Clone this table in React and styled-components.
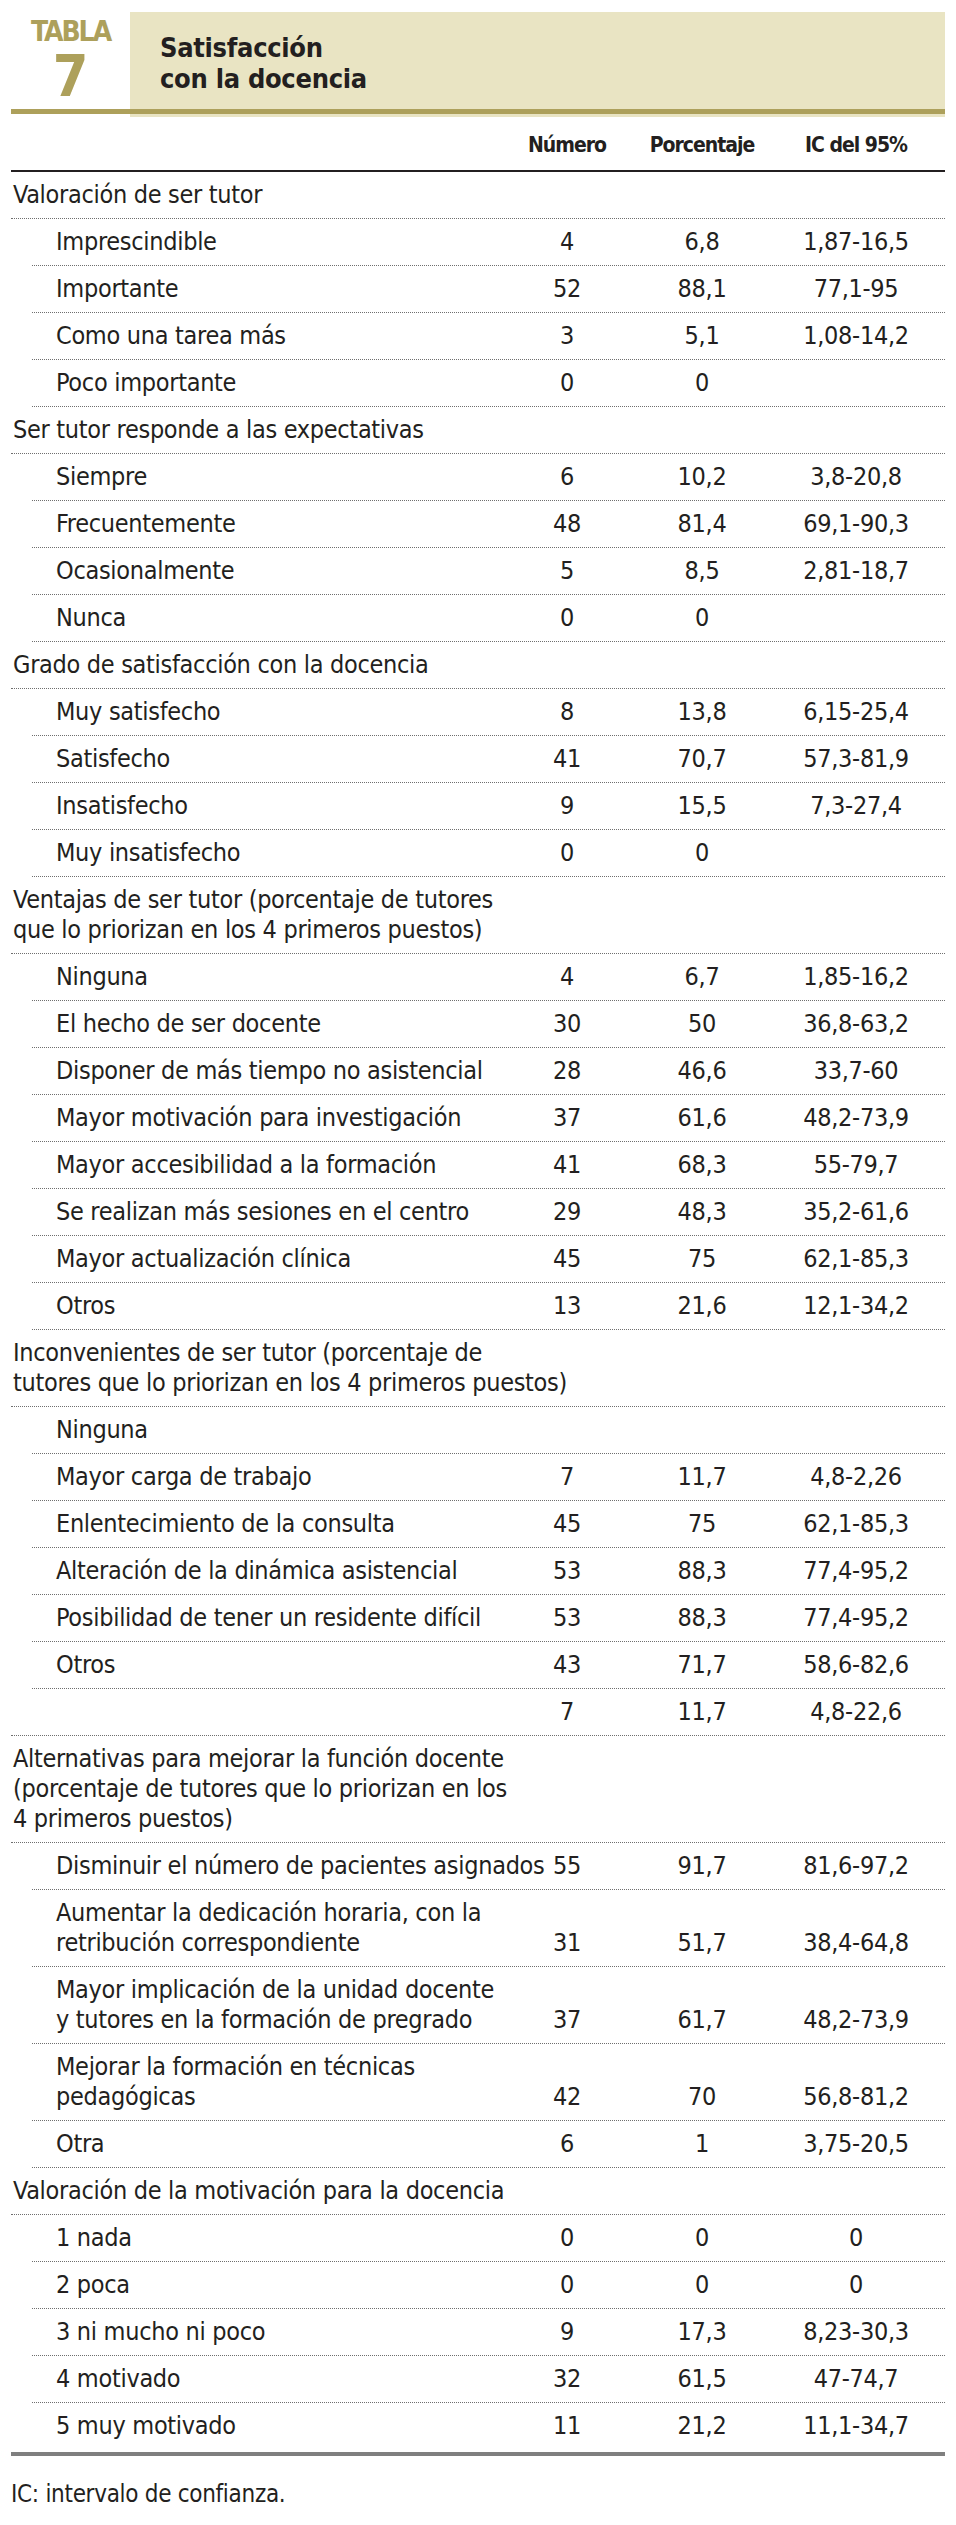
import styled, { createGlobalStyle } from "styled-components";

const GlobalStyle = createGlobalStyle`
  body {
    margin: 0;
    background: #fff;
    font-family: "DejaVu Sans Condensed", "DejaVu Sans", "Liberation Sans", sans-serif;
    font-stretch: condensed;
    color: #231f20;
  }
`;

const GOLD = "#ada05b";
const BEIGE = "#e9e4c3";

const Page = styled.div`
  width: 934px;
  padding: 12px 11px 20px;
`;

const Header = styled.div`
  position: relative;
  display: flex;
  height: 105px;
  &::after {
    content: "";
    position: absolute;
    left: 0;
    right: 0;
    bottom: 3px;
    height: 5px;
    background: ${GOLD};
  }
`;

const Badge = styled.div`
  width: 119px;
  display: flex;
  flex-direction: column;
  align-items: center;
  color: ${GOLD};
  font-weight: bold;
  padding-top: 5px;
  > .label {
    font-size: 28px;
    line-height: 30px;
    letter-spacing: -2px;
  }
  > .num {
    font-size: 57px;
    line-height: 58px;
  }
`;

const TitlePanel = styled.div`
  flex: 1;
  background: ${BEIGE};
  padding: 20px 30px 0;
  font-size: 27px;
  line-height: 31px;
  font-weight: bold;
  letter-spacing: -0.3px;
  color: #231f20;
`;

const Cols = styled.div`
  display: grid;
  grid-template-columns: minmax(0, 1fr) 134px 136px 172px;
  padding-right: 3px;
`;

const HeadRow = styled(Cols)`
  height: 51px;
  border-bottom: 2px solid #231f20;
  align-items: center;
  font-weight: bold;
  font-size: 21px;
  letter-spacing: -1px;
  padding-top: 2px;
  > span {
    text-align: center;
  }
`;

const Row = styled(Cols)`
  margin-left: ${(p) => (p.$sub ? "21px" : "0")};
  padding: 8px 3px 8px ${(p) => (p.$sub ? "24px" : "2px")};
  border-bottom: ${(p) => (p.$last ? "none" : "1px dotted #6f6f6f")};
  font-size: 25px;
  letter-spacing: -0.3px;
  line-height: 30px;
  align-items: end;
`;

const Label = styled.span`
  grid-column: ${(p) => (p.$full ? "1 / -1" : "auto")};
  white-space: nowrap;
`;

const Value = styled.span`
  text-align: center;
`;

const BottomRule = styled.div`
  height: 4px;
  background: #7f7f7f;
  margin-top: 3px;
`;

const Note = styled.p`
  margin: 23px 0 0;
  font-size: 24px;
  letter-spacing: -0.3px;
  line-height: 30px;
`;

const data = [
  { g: "Valoración de ser tutor" },
  { s: "Imprescindible", v: ["4", "6,8", "1,87-16,5"] },
  { s: "Importante", v: ["52", "88,1", "77,1-95"] },
  { s: "Como una tarea más", v: ["3", "5,1", "1,08-14,2"] },
  { s: "Poco importante", v: ["0", "0", ""] },
  { g: "Ser tutor responde a las expectativas" },
  { s: "Siempre", v: ["6", "10,2", "3,8-20,8"] },
  { s: "Frecuentemente", v: ["48", "81,4", "69,1-90,3"] },
  { s: "Ocasionalmente", v: ["5", "8,5", "2,81-18,7"] },
  { s: "Nunca", v: ["0", "0", ""] },
  { g: "Grado de satisfacción con la docencia" },
  { s: "Muy satisfecho", v: ["8", "13,8", "6,15-25,4"] },
  { s: "Satisfecho", v: ["41", "70,7", "57,3-81,9"] },
  { s: "Insatisfecho", v: ["9", "15,5", "7,3-27,4"] },
  { s: "Muy insatisfecho", v: ["0", "0", ""] },
  { g: ["Ventajas de ser tutor (porcentaje de tutores", "que lo priorizan en los 4 primeros puestos)"] },
  { s: "Ninguna", v: ["4", "6,7", "1,85-16,2"] },
  { s: "El hecho de ser docente", v: ["30", "50", "36,8-63,2"] },
  { s: "Disponer de más tiempo no asistencial", v: ["28", "46,6", "33,7-60"] },
  { s: "Mayor motivación para investigación", v: ["37", "61,6", "48,2-73,9"] },
  { s: "Mayor accesibilidad a la formación", v: ["41", "68,3", "55-79,7"] },
  { s: "Se realizan más sesiones en el centro", v: ["29", "48,3", "35,2-61,6"] },
  { s: "Mayor actualización clínica", v: ["45", "75", "62,1-85,3"] },
  { s: "Otros", v: ["13", "21,6", "12,1-34,2"] },
  { g: ["Inconvenientes de ser tutor (porcentaje de", "tutores que lo priorizan en los 4 primeros puestos)"] },
  { s: "Ninguna", v: ["", "", ""] },
  { s: "Mayor carga de trabajo", v: ["7", "11,7", "4,8-2,26"] },
  { s: "Enlentecimiento de la consulta", v: ["45", "75", "62,1-85,3"] },
  { s: "Alteración de la dinámica asistencial", v: ["53", "88,3", "77,4-95,2"] },
  { s: "Posibilidad de tener un residente difícil", v: ["53", "88,3", "77,4-95,2"] },
  { s: "Otros", v: ["43", "71,7", "58,6-82,6"] },
  { g: "", v: ["7", "11,7", "4,8-22,6"] },
  { g: ["Alternativas para mejorar la función docente", "(porcentaje de tutores que lo priorizan en los", "4 primeros puestos)"] },
  { s: "Disminuir el número de pacientes asignados", v: ["55", "91,7", "81,6-97,2"] },
  { s: ["Aumentar la dedicación horaria, con la", "retribución correspondiente"], v: ["31", "51,7", "38,4-64,8"] },
  { s: ["Mayor implicación de la unidad docente", "y tutores en la formación de pregrado"], v: ["37", "61,7", "48,2-73,9"] },
  { s: ["Mejorar la formación en técnicas", "pedagógicas"], v: ["42", "70", "56,8-81,2"] },
  { s: "Otra", v: ["6", "1", "3,75-20,5"] },
  { g: "Valoración de la motivación para la docencia" },
  { s: "1 nada", v: ["0", "0", "0"] },
  { s: "2 poca", v: ["0", "0", "0"] },
  { s: "3 ni mucho ni poco", v: ["9", "17,3", "8,23-30,3"] },
  { s: "4 motivado", v: ["32", "61,5", "47-74,7"] },
  { s: "5 muy motivado", v: ["11", "21,2", "11,1-34,7"] },
];

const lines = (text) =>
  Array.isArray(text)
    ? text.map((t, i) => (
        <span key={i}>
          {i > 0 && <br />}
          {t}
        </span>
      ))
    : text || "\u00a0";

const App = () => {
  return (
    <>
      <GlobalStyle />
      <Page>
        <Header>
          <Badge>
            <span className="label">TABLA</span>
            <span className="num">7</span>
          </Badge>
          <TitlePanel>
            Satisfacción
            <br />
            con la docencia
          </TitlePanel>
        </Header>
        <HeadRow>
          <span />
          <span>Número</span>
          <span>Porcentaje</span>
          <span>IC del 95%</span>
        </HeadRow>
        {data.map((r, i) => {
          const isSub = r.s !== undefined;
          const last = i === data.length - 1;
          return (
            <Row key={i} $sub={isSub} $last={last}>
              <Label $full={!r.v}>{lines(isSub ? r.s : r.g)}</Label>
              {r.v && r.v.map((v, j) => <Value key={j}>{v}</Value>)}
            </Row>
          );
        })}
        <BottomRule />
        <Note>IC: intervalo de confianza.</Note>
      </Page>
    </>
  );
};

export default App;
